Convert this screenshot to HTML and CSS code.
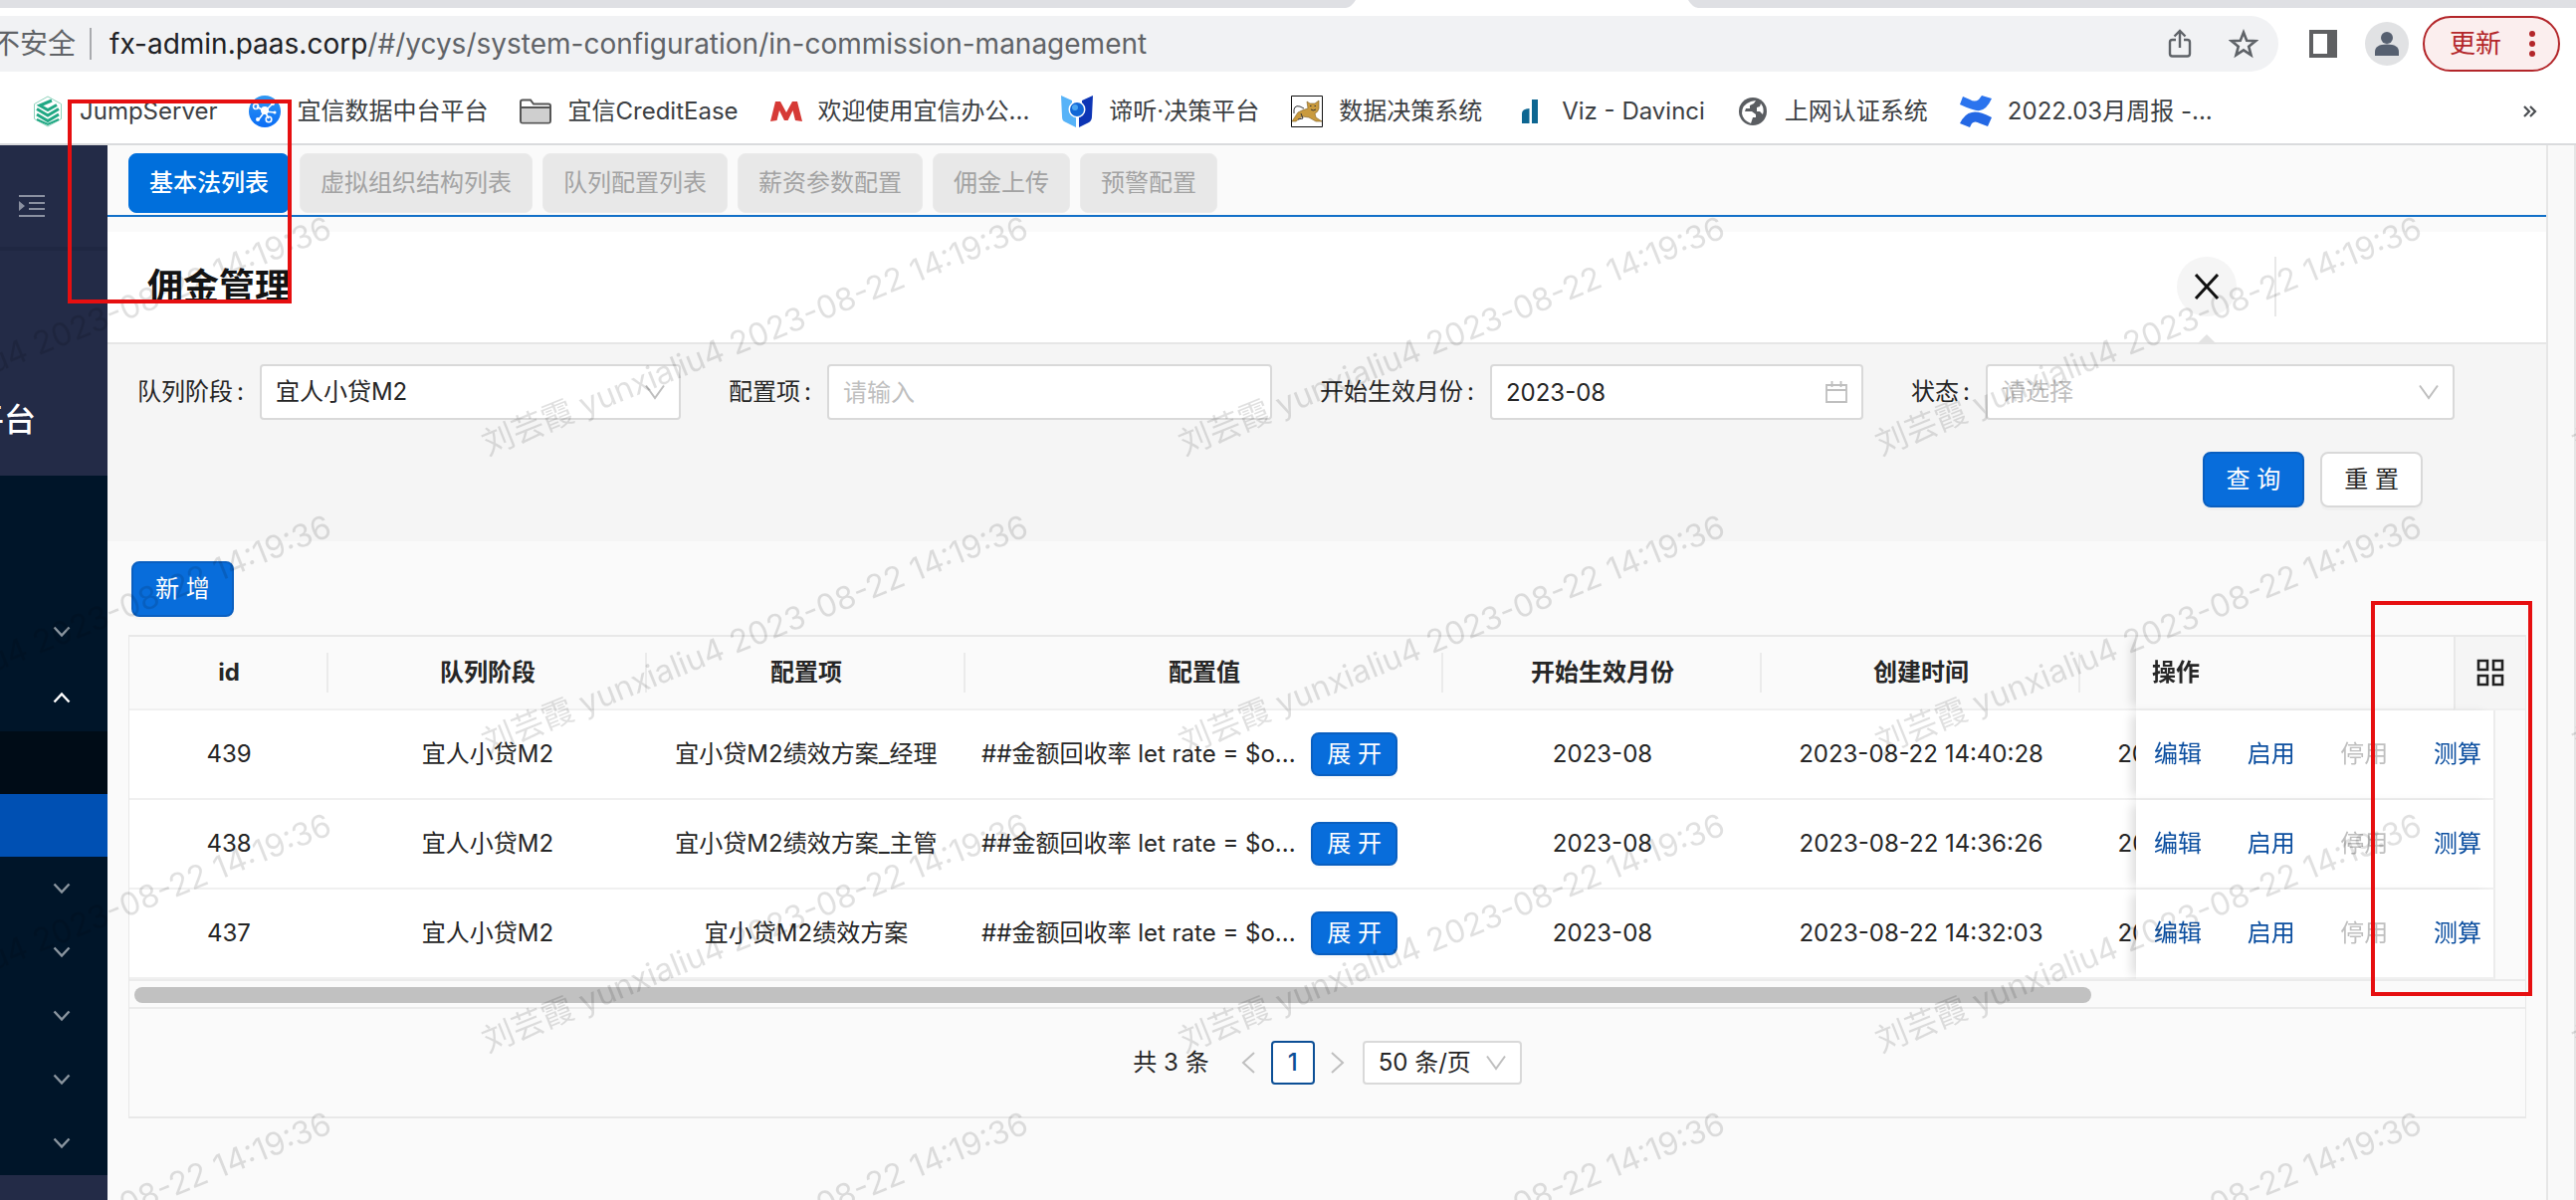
FILE: index.html
```html
<!DOCTYPE html>
<html lang="zh-CN">
<head>
<meta charset="utf-8">
<title>佣金管理</title>
<link rel="stylesheet" href="styles.css">
</head>
<body>
<header class="browser">
  <div class="tabstrip"><svg class="tabstrip-active" viewBox="0 0 354 8" aria-hidden="true"><path d="M0 8Q6 7 10 0H344Q348 7 354 8Z" fill="#fff"/></svg></div>
  <div class="toolbar">
    <div class="omnibox">
      <span class="insecure">不安全</span>
      <span class="omnibox-rule"></span>
      <span class="url"><b>fx-admin.paas.corp</b>/#/ycys/system-configuration/in-commission-management</span>
      <button class="icon-btn" aria-label="分享"><svg width="24" height="30" viewBox="0 0 24 30" fill="none" stroke="#5f6368" stroke-width="2.4"><path d="M8 11H4.500Q2 11 2 13.500V25Q2 27.500 4.500 27.500H19.500Q22 27.500 22 25V13.500Q22 11 19.500 11H16M12 19V2M6.500 7.500L12 2L17.500 7.500"/></svg></button>
      <button class="icon-btn" aria-label="收藏"><svg width="30" height="30" viewBox="0 0 30 30" fill="none" stroke="#5f6368" stroke-width="2.600"><path d="M15 3.500L18.200 11.700L27 12.200L20.200 17.700L22.500 26.300L15 21.400L7.500 26.300L9.800 17.700L3 12.200L11.800 11.700Z"/></svg></button>
    </div>
    <button class="icon-btn" aria-label="侧边栏"><svg width="28" height="28" viewBox="0 0 28 28"><path fill="#5f6062" fill-rule="evenodd" d="M0 0H28V28H0ZM4 4V24H18V4Z"/></svg></button>
    <button class="icon-btn" aria-label="个人资料"><svg width="44" height="44" viewBox="0 0 44 44"><circle cx="22" cy="22" r="22" fill="#e1e2e4"/><circle cx="22" cy="16" r="6" fill="#566070"/><path d="M10 34V30Q10 22.500 22 22.500T34 30V34Z" fill="#566070"/></svg></button>
    <button class="update">更新<svg width="6" height="28" viewBox="0 0 6 28" fill="#b3262a"><circle cx="3" cy="4" r="3"/><circle cx="3" cy="14" r="3"/><circle cx="3" cy="24" r="3"/></svg></button>
  </div>
  <nav class="bookmarks">
    <a href="#"><svg viewBox="0 0 32 32"><path d="M16 1L29.500 8.500V23.500L16 31L2.500 23.500V8.500Z" fill="#fff" stroke="#8fd3bd"/><g fill="none" stroke="#20a884" stroke-width="3"><path d="M5 19L16 25.500L27 19"/><path d="M5 24L16 29L27 24" stroke-width="2"/><path d="M5 13.500L16 20L27 13.500"/><path d="M20 5L8 10L16 14.500L25 9.500"/></g></svg>JumpServer</a>
    <a href="#"><svg viewBox="0 0 32 32"><defs><linearGradient id="gb" x1="0" y1="0" x2="0" y2="1"><stop offset="0" stop-color="#3098f2"/><stop offset="1" stop-color="#0a6cf5"/></linearGradient></defs><circle cx="16" cy="16" r="16" fill="url(#gb)"/><g stroke="#fff" stroke-width="1.600" fill="none"><path d="M16 16L8 11M16 16L23 9M16 16L20 23M16 16L10 24M16 16L26 17"/><circle cx="7" cy="11" r="2.500"/><circle cx="20" cy="24" r="2.800"/></g><g fill="#fff"><circle cx="16" cy="15" r="4"/><circle cx="24" cy="8" r="2"/><circle cx="9" cy="24" r="2"/><circle cx="26" cy="17" r="1.500"/></g></svg>宜信数据中台平台</a>
    <a href="#"><svg viewBox="0 0 32 32"><path d="M1 6.500Q1 4.500 3 4.500H11L14 8.500H29Q31 8.500 31 10.500V25Q31 27.500 29 27.500H3Q1 27.500 1 25Z" fill="#fff" stroke="#555" stroke-width="2"/><path d="M2 12H30V26.500H2Z" fill="#cfcfcf"/><path d="M1 12H31" stroke="#555" stroke-width="2"/></svg>宜信CreditEase</a>
    <a href="#"><svg viewBox="0 0 32 32"><path d="M0 26L5 6H10L16 17L22 6H27L32 26L25 25L22.500 15L17.500 25H14L9 15L6.500 25Z" fill="#d63a36"/></svg>欢迎使用宜信办公...</a>
    <a href="#"><svg viewBox="0 0 32 32"><path d="M0 0L11 5V14Q11 19 15 21V32L3 26Q1 25 1 21Z" fill="#57b3f8"/><path d="M32 0L21 5V14Q22 19 18 21V32L28 27Q31 25 31 21Z" fill="#0d35b5"/><circle cx="16" cy="14" r="8.500" fill="#fff"/><circle cx="16" cy="14" r="7" fill="#1268d6"/><circle cx="14" cy="12" r="3" fill="#4ba6f2"/></svg>谛听·决策平台</a>
    <a href="#"><svg viewBox="0 0 32 32"><path d="M.5.500H31.500V31.500H.500Z" fill="#fff" stroke="#111"/><path d="M1 26L7 17Q12 14 17 13L16 6L19 8H24L28 5V13Q27 17 24 18L25 22L31 26H25L18 22L11 21L5 26Z" fill="#c99a3e" stroke="#7a5a20" stroke-width=".600"/><path d="M3 18Q2 9 9 11L13 13M10 18L12 23L7 24" fill="none" stroke="#333"/><path d="M19 10.500H20.500M23.500 10.500H25M20 14Q22 16 25 14" stroke="#333" fill="none"/></svg>数据决策系统</a>
    <a href="#"><svg viewBox="0 0 32 32"><path d="M18 4H24V28H18ZM8 28V18Q8 13.500 15.500 13V28Z" fill="#0d6691"/></svg>Viz - Davinci</a>
    <a href="#"><svg viewBox="0 0 32 32"><circle cx="16" cy="16" r="14" fill="#5a5d61"/><path d="M5 18Q5 9 14 6L19 5L17 8L13 10V13H9L8 16H15L19 19V22H16L14 28Q6 25 5 18ZM24 8Q28 13 26 19L23 16H20V12L23 11Z" fill="#fff"/></svg>上网认证系统</a>
    <a href="#"><svg viewBox="0 0 32 32"><path d="M3 1L10 4Q15 7 19 4L22 0L32 3Q27 14 20 15Q15 16 0 9Z" fill="#2b74ee"/><path d="M0 28Q5 18 12 17Q18 15 32 22L28 31L20 28Q15 25 12 28L10 32Z" fill="#2468e4"/></svg>2022.03月周报 -...</a>
    <button class="more" aria-label="更多书签"><svg width="14" height="12" viewBox="0 0 14 12" fill="none" stroke="#4a4d51" stroke-width="2.200"><path d="M1 1L6 6L1 11M7 1L12 6L7 11"/></svg></button>
  </nav>
</header>

<svg class="defs" width="0" height="0" aria-hidden="true">
  <symbol id="down" viewBox="0 0 20 16"><path d="M1 1.500L10 14L19 1.500" fill="none" stroke="currentColor" stroke-width="2"/></symbol>
  <symbol id="caret" viewBox="0 0 18 12"><path d="M1.500 1.500L9 9.500L16.500 1.500" fill="none" stroke="currentColor" stroke-width="2.400"/></symbol>
</svg>

<div class="page">
  <aside class="sidebar">
    <div class="side-top"><button class="icon-btn" aria-label="展开菜单"><svg width="26" height="22" viewBox="0 0 26 22"><path d="M0 0H26V2H0ZM10 7H26V9H10ZM10 13H26V15H10ZM0 20H26V22H0ZM0 6L6 11L0 16Z" fill="#8a90a0"/></svg></button></div>
    <div class="side-brand"><span>平台</span></div>
    <nav class="side-nav">
      <button aria-label="菜单一"><svg><use href="#caret"/></svg></button>
      <button aria-label="菜单二" class="open"><svg><use href="#caret"/></svg></button>
      <a href="#" class="sub" aria-label="子菜单"></a>
      <a href="#" class="sub current" aria-label="佣金管理"></a>
      <button aria-label="菜单三"><svg><use href="#caret"/></svg></button>
      <button aria-label="菜单四"><svg><use href="#caret"/></svg></button>
      <button aria-label="菜单五"><svg><use href="#caret"/></svg></button>
      <button aria-label="菜单六"><svg><use href="#caret"/></svg></button>
      <button aria-label="菜单七"><svg><use href="#caret"/></svg></button>
    </nav>
  </aside>

  <main class="main">
    <nav class="tabs">
      <button class="tab active">基本法列表</button>
      <button class="tab">虚拟组织结构列表</button>
      <button class="tab">队列配置列表</button>
      <button class="tab">薪资参数配置</button>
      <button class="tab">佣金上传</button>
      <button class="tab">预警配置</button>
    </nav>
    <div class="title-bar">
      <h1>佣金管理</h1>
      <div class="title-tools">
        <button class="close" aria-label="关闭"><svg width="26" height="26" viewBox="0 0 26 26" fill="none" stroke="#111" stroke-width="3"><path d="M2 1L24 25M24 1L2 25"/></svg></button>
        <svg class="notch" width="20" height="10" viewBox="0 0 20 10"><path d="M0 10L10 0L20 10Z" fill="#e3e3e3"/></svg>
      </div>
    </div>

    <form class="filters">
      <div class="fields">
        <div class="field"><label for="stage">队列阶段<i>:</i></label><div class="control"><select id="stage"><option>宜人小贷M2</option></select><svg><use href="#down"/></svg></div></div>
        <div class="field"><label for="item">配置项<i>:</i></label><div class="control"><input id="item" type="text" placeholder="请输入"></div></div>
        <div class="field"><label for="month">开始生效月份<i>:</i></label><div class="control"><input id="month" type="text" value="2023-08"><svg class="cal" viewBox="0 0 22 22"><path d="M1 4H21V21H1ZM1 9H21M6.500 0V6M15.500 0V6" fill="none" stroke="currentColor" stroke-width="1.800"/></svg></div></div>
        <div class="field"><label for="state">状态<i>:</i></label><div class="control"><select id="state" class="empty"><option>请选择</option></select><svg><use href="#down"/></svg></div></div>
      </div>
      <div class="form-actions">
        <button type="button" class="btn primary">查 询</button>
        <button type="button" class="btn">重 置</button>
      </div>
    </form>

    <section class="list">
      <button class="btn primary">新 增</button>
      <div class="frame">
        <div class="scroller">
          <table>
            <colgroup><col class="c-id"><col class="c-md"><col class="c-md"><col class="c-lg"><col class="c-md"><col class="c-md"><col class="c-md"><col class="c-op"><col class="c-pad"><col class="c-end"></colgroup>
            <thead><tr><th>id</th><th>队列阶段</th><th>配置项</th><th>配置值</th><th>开始生效月份</th><th>创建时间</th><th></th><th class="fix-op">操作</th><th class="fix-set" colspan="2"><button class="icon-btn" aria-label="列设置"><svg width="28" height="28" viewBox="0 0 28 28" fill="none" stroke="#222" stroke-width="2.600"><path d="M2 2H11V11H2ZM17 2H26V11H17ZM2 17H11V26H2ZM17 17H26V26H17Z"/></svg></button></th></tr></thead>
            <tbody>
              <tr><td>439</td><td>宜人小贷M2</td><td>宜小贷M2绩效方案_经理</td><td><div class="value"><span>##金额回收率 let rate = $o...</span><button class="btn small primary">展 开</button></div></td><td>2023-08</td><td>2023-08-22 14:40:28</td><td>2023-08-22 14:40:28</td><td class="fix-row" colspan="2"><div class="ops"><a href="#">编辑</a><a href="#">启用</a><a class="off">停用</a><a href="#">测算</a></div></td><td class="fix-end"></td></tr>
              <tr><td>438</td><td>宜人小贷M2</td><td>宜小贷M2绩效方案_主管</td><td><div class="value"><span>##金额回收率 let rate = $o...</span><button class="btn small primary">展 开</button></div></td><td>2023-08</td><td>2023-08-22 14:36:26</td><td>2023-08-22 14:36:26</td><td class="fix-row" colspan="2"><div class="ops"><a href="#">编辑</a><a href="#">启用</a><a class="off">停用</a><a href="#">测算</a></div></td><td class="fix-end"></td></tr>
              <tr><td>437</td><td>宜人小贷M2</td><td>宜小贷M2绩效方案</td><td><div class="value"><span>##金额回收率 let rate = $o...</span><button class="btn small primary">展 开</button></div></td><td>2023-08</td><td>2023-08-22 14:32:03</td><td>2023-08-22 14:32:03</td><td class="fix-row" colspan="2"><div class="ops"><a href="#">编辑</a><a href="#">启用</a><a class="off">停用</a><a href="#">测算</a></div></td><td class="fix-end"></td></tr>
            </tbody>
          </table>
        </div>
        <div class="track"><div class="thumb"></div></div>
        <div class="pager">
          <span class="total">共 3 条</span>
          <button class="arrow" aria-label="上一页"><svg width="14" height="22" viewBox="0 0 14 22"><path d="M13 1L2 11L13 21" fill="none" stroke="currentColor" stroke-width="2"/></svg></button>
          <button class="num">1</button>
          <button class="arrow" aria-label="下一页"><svg width="14" height="22" viewBox="0 0 14 22"><path d="M1 1L12 11L1 21" fill="none" stroke="currentColor" stroke-width="2"/></svg></button>
          <div class="control size"><select aria-label="每页条数"><option>50 条/页</option></select><svg><use href="#down"/></svg></div>
        </div>
      </div>
    </section>
  </main>
  <div class="gutter"></div>
</div>

<svg class="watermark" aria-hidden="true"><defs><pattern id="wm" x="470" y="-20" width="700" height="300" patternUnits="userSpaceOnUse"><text transform="translate(20 260) rotate(-22)">刘芸霞 yunxialiu4 2023-08-22 14:19:36</text></pattern></defs><rect width="100%" height="100%" fill="url(#wm)"/></svg>
<div class="mark mark-tab"></div>
<div class="mark mark-calc"></div>
</body>
</html>
```

FILE: styles.css
```css
* { box-sizing: border-box; }
body {
  margin: 0;
  position: relative;
  min-height: 100vh;
  display: flex;
  flex-direction: column;
  overflow-x: hidden;
  font: 24px/36px Inter, "Noto Sans CJK SC", sans-serif;
  color: #262626;
  background: #fafafa;
}
button, input, select { font: inherit; color: inherit; margin: 0; }
button { cursor: pointer; }
a { text-decoration: none; color: inherit; }
svg { flex: none; display: block; }
.defs { position: absolute; }
.icon-btn { display: flex; padding: 0; border: 0; background: none; }

/* browser chrome */
.browser { background: #fff; border-bottom: 2px solid #dadbdd; }
.tabstrip { height: 8px; background: #dfe0e4; padding-left: 1352px; }
.tabstrip-active { width: 354px; height: 8px; }
.toolbar { display: flex; align-items: center; height: 72px; padding-right: 16px; }
.omnibox {
  flex: 1; display: flex; align-items: center; height: 56px; margin-right: 31px;
  padding-right: 20px; background: #f1f2f4; border-radius: 0 28px 28px 0;
  font-size: 28px; color: #606367; overflow: hidden;
}
.insecure { margin-left: -8px; }
.omnibox-rule { width: 2px; height: 32px; margin: 0 18px 0 14px; background: #a9abae; }
.url { flex: 1; white-space: nowrap; }
.url b { font-weight: 400; color: #202124; }
.omnibox .icon-btn + .icon-btn { margin-left: 37px; }
.toolbar > .icon-btn { margin-right: 28px; }
.toolbar > .icon-btn + .icon-btn { margin-right: 14px; }
.update {
  display: flex; align-items: center; justify-content: space-between; width: 138px; height: 56px;
  padding: 0 23px 0 25px; border: 2px solid #b3262a; border-radius: 28px;
  background: #fbeeee; color: #b3262a; font-size: 26px;
}
.bookmarks { display: flex; align-items: center; gap: 32px; height: 64px; padding: 0 39px 0 32px; color: #3c4043; white-space: nowrap; }
.bookmarks a { display: flex; align-items: center; gap: 16px; }
.bookmarks a svg { width: 32px; height: 32px; }
.more { margin-left: auto; padding: 0; border: 0; background: none; }

/* shell */
.page { flex: 1; display: flex; }
.sidebar { width: 108px; flex: none; background: #232b47; }
.side-top { height: 106px; padding: 50px 0 0 19px; border-bottom: 4px solid #1f2742; }
.side-brand { height: 226px; padding-top: 152px; overflow: hidden; color: #fff; font-size: 32px; font-weight: 500; text-indent: -28px; }
.side-nav { background: #001529; padding-top: 125px; color: #8a959f; }
.side-nav button { display: flex; align-items: center; justify-content: flex-end; width: 100%; height: 64px; padding: 0 37px; border: 0; background: none; }
.side-nav svg { width: 18px; height: 12px; }
.side-nav .open { height: 68px; color: #fff; }
.side-nav .open svg { transform: rotate(180deg); }
.sub { display: block; height: 63px; background: #000c17; }
.sub.current { background: #0050b3; }
.main { flex: 1; min-width: 0; }
.gutter { width: 30px; flex: none; border: solid #e6e6e6; border-width: 0 2px 0 2px; background: #f9f9f9; }

.tabs { display: flex; gap: 10px; height: 72px; padding: 8px 21px 0; border-bottom: 2px solid #1270c8; }
.tab { height: 60px; padding: 0 20px; border: 1px solid #ebebeb; border-radius: 8px; background: #e8e8e8; color: #a3a3a3; white-space: nowrap; }
.tab.active { background: #006fdc; border-color: #006fdc; color: #fff; font-weight: 500; }

.title-bar {
  display: flex; align-items: center; justify-content: space-between; height: 128px; padding: 14px 271px 0 40px;
  background: linear-gradient(#fafafa 15px, #fff 15px); border-bottom: 2px solid #e6e6e6;
}
h1 { margin: 0; font-size: 36px; line-height: 54px; font-weight: 600; color: #141414; }
.title-tools { position: relative; padding-right: 38px; border-right: 2px solid #e8e8e8; }
.close { display: flex; align-items: center; justify-content: center; width: 60px; height: 60px; padding: 0; border: 0; border-radius: 50%; background: #f5f5f5; }
.notch { position: absolute; left: 20px; bottom: -28px; }

/* filters */
.filters { padding: 20px 92px 34px 30px; background: #f5f5f5; }
.fields { display: grid; grid-template-columns: repeat(4, 1fr); gap: 48px; }
.field { display: flex; align-items: center; }
.field label { white-space: nowrap; padding-right: 16px; }
.field i { font-style: normal; margin-left: 4px; }
.control { position: relative; flex: 1; height: 56px; }
.control input, .control select {
  width: 100%; height: 100%; padding: 0 14px; border: 2px solid #d9d9d9; border-radius: 4px;
  background: #fff; appearance: none; outline: 0;
}
.control ::placeholder, .control .empty { color: #bfbfbf; opacity: 1; }
.control svg { position: absolute; right: 16px; top: 0; bottom: 0; margin: auto; width: 20px; height: 16px; color: #bfbfbf; pointer-events: none; }
.control .cal { width: 22px; height: 22px; }
.form-actions { display: flex; justify-content: flex-end; gap: 16px; margin-top: 32px; padding-right: 32px; }

.btn { height: 56px; padding: 0 22px; border: 2px solid #d9d9d9; border-radius: 8px; background: #fff; white-space: nowrap; box-shadow: 0 3px 0 rgba(0, 0, 0, .02); }
.btn.primary { background: #086ddb; border-color: #0a5fc0; color: #fff; }
.btn.small { height: 44px; padding: 0 14px; }

/* list */
.list { padding: 20px 20px 84px 21px; }
.list > .btn { margin-left: 3px; }
.frame { margin-top: 18px; border: solid #e8e8e8; border-width: 2px 1px; }
.scroller { overflow: hidden; }
table { table-layout: fixed; width: 2671px; border-collapse: separate; border-spacing: 0; }
.c-id { width: 200px; } .c-md { width: 320px; } .c-lg { width: 480px; }
.c-op { width: 319px; } .c-pad { width: 42px; } .c-end { width: 30px; }
th, td { padding: 0 16px; text-align: center; white-space: nowrap; border-bottom: 2px solid #f0f0f0; overflow: hidden; }
th { height: 74px; font-weight: 700; background: linear-gradient(#ebebeb, #ebebeb) right center / 2px 40px no-repeat #fafafa; }
td { height: 90px; background: #fff; }
.fix-op, .fix-set, .fix-row, .fix-end { position: sticky; overflow: visible; }
.fix-op { right: 72px; text-align: left; background: #fafafa; box-shadow: -8px 0 10px -4px rgba(0, 0, 0, .14); }
.fix-set { right: 0; padding: 0; background: #f5f5f5; border-left: 2px solid #e8e8e8; }
.fix-set .icon-btn { margin: 0 auto; }
.fix-row { right: 30px; padding: 0 12px 0 18px; border-right: 2px solid #ececec; box-shadow: -8px 0 10px -4px rgba(0, 0, 0, .14); }
.fix-end { right: 0; padding: 0; background: #fafafa; border-bottom-color: #fafafa; }
.value { display: flex; align-items: baseline; justify-content: space-between; width: 418px; }
.ops { display: flex; justify-content: space-between; color: #0c4fa0; }
.ops .off { color: #bfbfbf; }
.track { height: 30px; padding: 6px 5px 0; border: solid #ebebeb; border-width: 2px 0; }
.thumb { width: 82%; height: 16px; border-radius: 8px; background: #c1c1c1; }
.pager { display: flex; align-items: center; justify-content: center; height: 108px; }
.arrow { display: flex; padding: 0; margin: 0 16px; border: 0; background: none; color: #bfbfbf; }
.total { margin-right: 16px; }
.num { width: 44px; height: 44px; padding: 0; border: 2px solid #0c4f96; border-radius: 4px; background: #fff; color: #0c4f96; font-weight: 500; }
.control.size { flex: none; width: 160px; height: 44px; margin-left: 2px; }

/* overlays */
.watermark { position: absolute; left: 0; top: 218px; width: 100%; height: calc(100% - 218px); pointer-events: none; }
.watermark text { font: 32px Inter, "Noto Sans CJK SC", sans-serif; fill: #000; fill-opacity: .12; }
.mark { position: absolute; border: 4px solid #e60f10; pointer-events: none; }
.mark-tab { left: 68px; top: 100px; width: 225px; height: 205px; }
.mark-calc { right: 44px; top: 604px; width: 162px; height: 397px; }
```
